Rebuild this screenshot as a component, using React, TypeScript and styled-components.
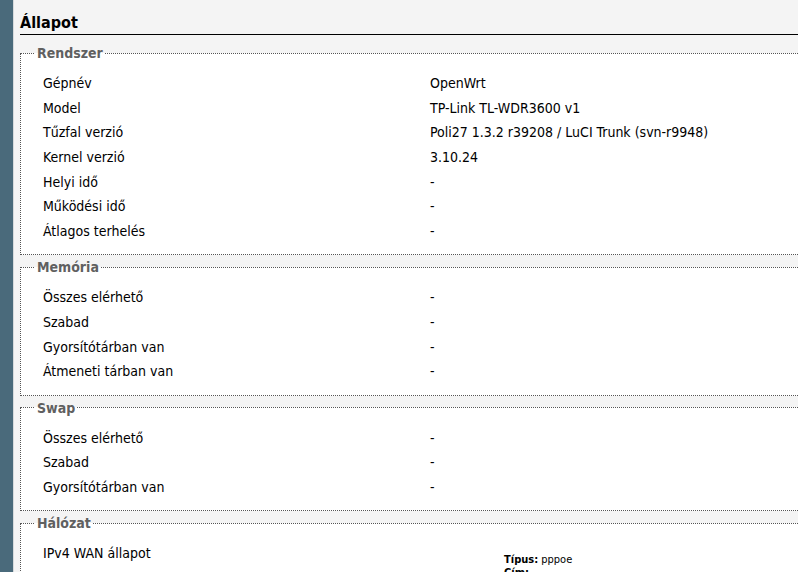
import React from "react";
import styled, { createGlobalStyle } from "styled-components";

const GlobalStyle = createGlobalStyle`
  html, body {
    margin: 0;
    padding: 0;
    background: #f4f4f4;
    overflow: hidden;
  }
  body {
    font-family: "DejaVu Sans Condensed", "DejaVu Sans", Tahoma, sans-serif;
    font-size: 14px;
    color: #000;
  }
`;

const Layout = styled.div`
  display: flex;
  width: 798px;
  height: 572px;
  overflow: hidden;
`;

const Sidebar = styled.div`
  width: 13px;
  flex: 0 0 13px;
  background: #4a6a7b;
  border-right: 1px solid #d6dadc;
`;

const Main = styled.main`
  flex: 1 1 auto;
  min-width: 0;
  padding: 0 0 0 6px;
`;

const Title = styled.h2`
  margin: 0 0 10px;
  padding: 13px 0 1px;
  font-size: 16px;
  font-weight: bold;
  line-height: 20px;
  border-bottom: 1px solid #000;
`;

const Section = styled.fieldset`
  margin: 0 0 4px;
  padding: 10px 0 10.67px 0;
  border: 1px dotted #555;
  border-right: none;
  background: #fff;
  min-width: 0;
`;

const Legend = styled.legend`
  margin-left: 14px;
  padding: 0 2px;
  font-weight: bold;
  font-size: 14px;
  line-height: 16px;
  color: #606060;
`;

const Rows = styled.div`
  display: grid;
  grid-template-columns: 387px auto;
  padding-left: 22px;
`;

const Cell = styled.div`
  height: 24.67px;
  line-height: 24.67px;
  white-space: nowrap;
`;

const StatusCell = styled.div`
  padding: 0 0 0 74px;
  font-size: 11px;
  line-height: 13px;
`;

const StatusLine = styled.div<{ $first?: boolean }>`
  margin-top: ${(p) => (p.$first ? "12px" : "0")};
  white-space: nowrap;
`;

type Row = [string, string];

const system: Row[] = [
  ["Gépnév", "OpenWrt"],
  ["Model", "TP-Link TL-WDR3600 v1"],
  ["Tűzfal verzió", "Poli27 1.3.2 r39208 / LuCI Trunk (svn-r9948)"],
  ["Kernel verzió", "3.10.24"],
  ["Helyi idő", "-"],
  ["Működési idő", "-"],
  ["Átlagos terhelés", "-"],
];

const memory: Row[] = [
  ["Összes elérhető", "-"],
  ["Szabad", "-"],
  ["Gyorsítótárban van", "-"],
  ["Átmeneti tárban van", "-"],
];

const swap: Row[] = [
  ["Összes elérhető", "-"],
  ["Szabad", "-"],
  ["Gyorsítótárban van", "-"],
];

function Block({ title, rows }: { title: string; rows: Row[] }) {
  return (
    <Section>
      <Legend>{title}</Legend>
      <Rows>
        {rows.map(([k, v]) => (
          <React.Fragment key={k}>
            <Cell>{k}</Cell>
            <Cell>{v}</Cell>
          </React.Fragment>
        ))}
      </Rows>
    </Section>
  );
}

export default function App() {
  return (
    <>
      <GlobalStyle />
      <Layout>
        <Sidebar />
        <Main>
          <Title>Állapot</Title>
          <Block title="Rendszer" rows={system} />
          <Block title="Memória" rows={memory} />
          <Block title="Swap" rows={swap} />
          <Section>
            <Legend>Hálózat</Legend>
            <Rows>
              <Cell>IPv4 WAN állapot</Cell>
              <StatusCell>
                <StatusLine $first>
                  <b>Típus:</b> pppoe
                </StatusLine>
                <StatusLine>
                  <b>Cím:</b> -
                </StatusLine>
              </StatusCell>
            </Rows>
          </Section>
        </Main>
      </Layout>
    </>
  );
}
